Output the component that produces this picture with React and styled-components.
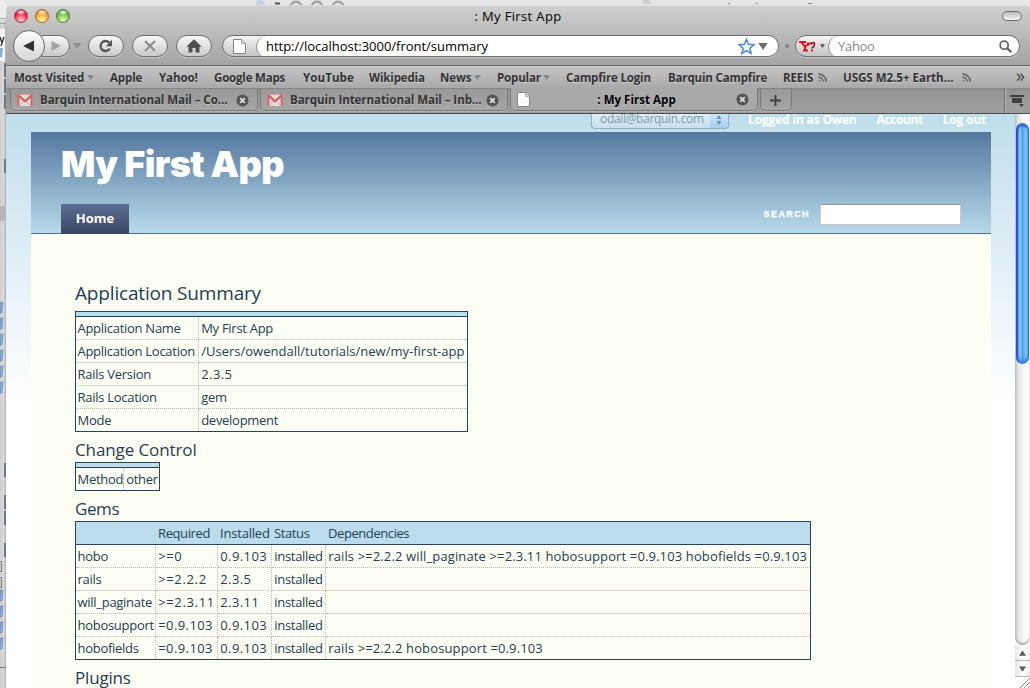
import React from "react";
import styled, { createGlobalStyle } from "styled-components";

const GlobalStyle = createGlobalStyle`
  * { box-sizing: border-box; }
  html, body { margin: 0; padding: 0; overflow: hidden; }
  body { font-family: "Open Sans", "Noto Sans", sans-serif; font-size: 13px; }
`;

/* ---------- desktop and window ---------- */

const Desktop = styled.div`
  position: relative;
  width: 1030px;
  height: 688px;
  padding: 5px 0 0 6px;
  background: linear-gradient(90deg, #cfcfcf 0, #dadada 4px, #a8a8a8 6px, #e6e6e6 6px);
  overflow: hidden;
`;

const Backdrop = styled.svg`
  position: absolute;
  left: 0;
  top: 0;
`;

const Window = styled.div`
  position: relative;
  display: flex;
  flex-direction: column;
  height: 683px;
  border-radius: 5px 5px 0 0;
  overflow: hidden;
  background: #fff;
`;

const Chrome = styled.header`
  height: 61px;
  border-top: 1px solid #dedede;
  border-bottom: 1px solid #5e5e5e;
  background: linear-gradient(#cfcfcf, #a3a3a3);
`;

const TitleBar = styled.div`
  display: flex;
  align-items: center;
  justify-content: space-between;
  height: 23px;
  padding: 0 8px 3px;
`;

const Lights = styled.div`
  display: flex;
  gap: 7px;
  width: 60px;
`;

const Light = styled.i`
  width: 14px;
  height: 14px;
  border-radius: 50%;
  border: 1px solid ${(p) => p.$edge};
  background: radial-gradient(ellipse 5px 3px at 50% 18%, rgba(255, 255, 255, 0.95), rgba(255, 255, 255, 0) 100%),
    radial-gradient(circle at 50% 85%, ${(p) => p.$glow} 10%, ${(p) => p.$mid} 62%, ${(p) => p.$edge} 100%);
`;

const WindowTitle = styled.h1`
  margin: 0;
  font-size: 13px;
  font-weight: 400;
  line-height: 20px;
  letter-spacing: 0.36px;
  color: #000;
`;

const Lozenge = styled.div`
  display: flex;
  justify-content: flex-end;
  width: 60px;

  i {
    width: 20px;
    height: 10px;
    border: 1px solid #6d6d6d;
    border-radius: 5px;
    background: linear-gradient(#bcbcbc, #f5f5f5);
  }
`;

const Toolbar = styled.div`
  display: flex;
  align-items: center;
  height: 36px;
  padding: 0 10px 2px 7px;
`;

const BackButton = styled.button`
  position: relative;
  display: grid;
  place-items: center;
  width: 32px;
  height: 32px;
  padding: 0;
  border: 1px solid #6a6a6a;
  border-radius: 50%;
  background: linear-gradient(#fdfdfd, #d6d6d6);
`;

const Pill = styled.button`
  display: grid;
  place-items: center;
  width: ${(p) => p.$w || 36}px;
  height: 22px;
  margin: 0 0 0 ${(p) => p.$ml}px;
  padding: 0 0 0 ${(p) => p.$pl || 0}px;
  border: 1px solid #6e6e6e;
  border-radius: 11px;
  background: linear-gradient(#f8f8f8, #c9c9c9);
  box-shadow: 0 1px 0 rgba(255, 255, 255, 0.35);
`;

const HistoryArrow = styled.svg`
  margin-left: 3px;
`;

const Field = styled.div`
  display: flex;
  align-items: center;
  width: ${(p) => p.$w}px;
  height: 22px;
  margin-left: ${(p) => p.$ml}px;
  border: 1px solid #6e6e6e;
  border-radius: 11px;
  background: linear-gradient(#f4f4f4, #c4c4c4);
  box-shadow: 0 1px 0 rgba(255, 255, 255, 0.35);
  overflow: hidden;
`;

const FieldIcon = styled.div`
  display: flex;
  align-items: center;
  justify-content: center;
  width: ${(p) => p.$w}px;
`;

const FieldInput = styled.div`
  display: flex;
  flex: 1;
  align-items: center;
  height: 21px;
  padding: 0 ${(p) => p.$pr}px 0 9px;
  border-left: 1px solid #8a8a8a;
  border-radius: 11px;
  background: #fff;
  color: ${(p) => p.$color};
  letter-spacing: ${(p) => p.$ls}px;

  span { flex: 1; }
`;

const GripDot = styled.i`
  width: 4px;
  height: 4px;
  margin-left: 6px;
  border-radius: 50%;
  background: #858585;
`;

const Bookmarks = styled.nav`
  display: flex;
  align-items: center;
  height: 22px;
  padding: 0 5px 0 8px;
  border-top: 1px solid #d2d2d2;
  background: linear-gradient(#c4c4c4, #a9a9a9);
`;

const Bookmark = styled.a`
  display: flex;
  flex: none;
  align-items: center;
  justify-content: space-between;
  width: ${(p) => p.$w}px;
  margin-right: 16px;
  font-size: 11.5px;
  font-weight: 700;
  line-height: 19px;
  padding-bottom: 1px;
  letter-spacing: ${(p) => p.$ls}px;
  white-space: nowrap;
  color: #333;
  text-shadow: 0 1px 0 rgba(255, 255, 255, 0.4);
`;

const Overflow = styled.span`
  margin-left: auto;
  padding-bottom: 5px;
  font-size: 18px;
  line-height: 18px;
  color: #444;
`;

const TabStrip = styled.div`
  display: flex;
  height: 26px;
  padding-left: 4px;
  border-bottom: 1px solid #4f4f4f;
  background: linear-gradient(#8b8b8b 0, #969696 5px, #9f9f9f);
`;

const Tab = styled.div`
  display: flex;
  align-items: center;
  width: ${(p) => p.$w || 248}px;
  height: 23px;
  margin-right: 2px;
  padding: 1px 8px 0 6px;
  justify-content: ${(p) => (p.$w ? "center" : "flex-start")};
  border: 1px solid #7a7a7a;
  border-top: ${(p) => (p.$active ? "0" : "1px solid #858585")};
  border-radius: 0 0 5px 5px;
  background: ${(p) => (p.$active ? "#a9a9a9" : "linear-gradient(#999, #a6a6a6)")};
  box-shadow: 0 1px 0 #b2b2b2;
`;

const TabTitle = styled.span`
  flex: 1;
  margin-left: 7px;
  font-size: 11.5px;
  font-weight: 700;
  line-height: 20px;
  letter-spacing: ${(p) => p.$ls}px;
  text-align: ${(p) => (p.$active ? "center" : "left")};
  white-space: nowrap;
  color: ${(p) => (p.$active ? "#000" : "#333")};
  text-shadow: 0 1px 0 rgba(255, 255, 255, 0.3);
`;

const TabMenu = styled.div`
  display: grid;
  place-items: center;
  width: 26px;
  margin-left: auto;
  border-left: 1px solid #6e6e6e;
  box-shadow: inset 1px 0 0 #b5b5b5;
`;

/* ---------- web page ---------- */

const Viewport = styled.div`
  display: flex;
  flex: 1;
  min-height: 0;
`;

const Page = styled.div`
  flex: 1;
  padding: 0 24px 0 25px;
  background: linear-gradient(#bfdeeb 0, #d9eaf3 110px, #eaf4fa 190px, #fff 290px);
  overflow: hidden;
`;

const Account = styled.div`
  display: flex;
  align-items: center;
  justify-content: flex-end;
  height: 18px;
  padding-right: 5px;
`;

const UserSelect = styled.div`
  display: flex;
  align-items: flex-end;
  width: 138px;
  height: 15px;
  margin: -4px 19px 0 0;
  padding-left: 8px;
  border: 1px solid #8db0cb;
  border-top: 0;
  border-radius: 0 0 4px 4px;
  background: linear-gradient(#dcedf6, #c9e0ec);
  color: #7e99a9;
  font-size: 12px;
  letter-spacing: -0.33px;

  span { flex: 1; line-height: 18px; }
`;

const SelectArrows = styled.div`
  display: grid;
  place-items: end center;
  width: 18px;
  height: 14px;
  padding-bottom: 3px;
  border-radius: 0 0 3px 0;
  background: linear-gradient(#cbe5f8, #a4cff0);
`;

const AccountLink = styled.a`
  margin: -7px 0 0 ${(p) => p.$ml || 0}px;
  font-size: 12px;
  font-weight: 700;
  line-height: 18px;
  letter-spacing: ${(p) => p.$ls}px;
  white-space: nowrap;
  color: #fff;
`;

const Banner = styled.div`
  display: flex;
  flex-direction: column;
  justify-content: space-between;
  height: 102px;
  padding: 11px 30px 0;
  background: linear-gradient(#54779f, #b9dbeb);
  box-shadow: inset 0 -1px 0 #4c7288;
`;

const SiteName = styled.h2`
  margin: 0;
  font-family: Inter, "Liberation Sans", sans-serif;
  font-size: 36px;
  font-weight: 900;
  line-height: 43px;
  letter-spacing: -0.6px;
  color: #fff;
`;

const BannerFoot = styled.div`
  display: flex;
  align-items: flex-start;
  height: 30px;
`;

const NavTab = styled.a`
  width: 68px;
  height: 30px;
  font-weight: 700;
  line-height: 29px;
  text-align: center;
  color: #fff;
  background: linear-gradient(#596d95, #3c4761);
`;

const SearchLabel = styled.label`
  margin-left: auto;
  font-family: "Liberation Sans", Arial, sans-serif;
  font-size: 9px;
  font-weight: 700;
  line-height: 21px;
  letter-spacing: 1.4px;
  color: #fff;
  -webkit-text-stroke: 0.3px #fff;
`;

const SearchInput = styled.input`
  width: 141px;
  height: 21px;
  margin-left: 10px;
  padding: 2px;
  border: 1px solid #c8cccd;
  border-top-color: #8b9499;
  background: #fff;
`;

const Content = styled.main`
  height: 460px;
  padding: 47px 44px 0;
  background: #fdfff5;
  color: #1f4053;
`;

const Heading = styled.h3`
  margin: ${(p) => (p.$large ? "0 0 6px" : "6px 0 0")};
  font-size: ${(p) => (p.$large ? 19 : 17)}px;
  font-weight: 400;
  line-height: 24px;
  letter-spacing: ${(p) => p.$ls}px;
`;

const Table = styled.div`
  display: grid;
  grid-template-columns: ${(p) => p.$cols};
  width: max-content;
  border: 1px solid #26475a;
`;

const HeadBand = styled.div`
  grid-column: 1 / -1;
  height: 5px;
  border-bottom: 1px solid #26475a;
  background: #bbdceb;
`;

const HeadCell = styled.div`
  height: 23px;
  padding-left: 2px;
  border-bottom: 1px solid #26475a;
  background: #bbdceb;
  font-size: 13px;
  line-height: 22px;
  letter-spacing: ${(p) => p.$ls}px;
  white-space: nowrap;
`;

const Cell = styled.div`
  height: ${(p) => (p.$last ? 22 : 23)}px;
  padding-left: ${(p) => (p.$first ? 1.5 : 2.2)}px;
  border-right: ${(p) => (p.$end ? "0" : "1px dotted #b9bdb6")};
  border-bottom: ${(p) => (p.$last ? "0" : "1px dotted #b9bdb6")};
  line-height: 22px;
  letter-spacing: ${(p) => p.$ls}px;
  white-space: nowrap;
`;

/* ---------- scroll bar ---------- */

const ScrollBar = styled.div`
  display: flex;
  flex-direction: column;
  width: 15px;
  background: #fff;
`;

const Track = styled.div`
  height: 531px;
  padding: 9px 1px 0;
  border-radius: 0 0 8px 8px;
  background: linear-gradient(90deg, #c6c6c6, #e9e9e9 4px, #f9f9f9 9px, #fff);
  box-shadow: inset 0 -2px 2px #a9a9a9;
`;

const Thumb = styled.div`
  height: 241px;
  border: 1px solid #3f6cae;
  border-left: 2px solid #1c58d8;
  border-radius: 7px;
  background: linear-gradient(90deg, #b0d2f5 0, #8fc0f2 3px, #3f9cf0 4px, #6fc0fb 7px, #a7e3ff 11px);
  box-shadow: inset 0 2px 2px #1a62dd, inset 0 -3px 3px #2f8af0;
`;

const ScrollButton = styled.div`
  display: grid;
  place-items: center;
  height: 16px;
  border-bottom: 1px solid #b5b5b5;
  background: linear-gradient(90deg, #e6e6e6, #fff 8px, #efefef);
`;

const Corner = styled.svg`
  margin-top: auto;
`;

/* ---------- icons ---------- */

const Down = ({ w = 7, h = 5, c = "#777" }) => (
  <svg width={w} height={h} viewBox="0 0 8 6"><path d="M0 0h8L4 6z" fill={c} /></svg>
);

const PageIcon = () => (
  <svg width="13" height="15" viewBox="0 0 13 15">
    <path d="M1 .5h7.5l4 4v10h-12V.5z" fill="#fff" stroke="#848484" />
    <path d="M8.5.5v4h4" fill="#ddd" stroke="#999" strokeWidth=".8" />
  </svg>
);

const MailIcon = () => (
  <svg width="16" height="12" viewBox="0 0 16 12">
    <rect width="16" height="12" rx="1" fill="#e4dada" />
    <path d="M3 11l4-5M13 11L9 6" stroke="#c3aeae" fill="none" />
    <path d="M1.3 12V1.2L8 7.2l6.700-6V12" stroke="#cd6464" strokeWidth="2.2" fill="none" />
    <path d="M2 .5h12" stroke="#dc9999" />
  </svg>
);

const CloseIcon = () => (
  <svg width="13" height="13" viewBox="0 0 13 13">
    <circle cx="6.500" cy="6.500" r="6" fill="#555" />
    <path d="M4.200 4.200l4.600 4.600M8.800 4.200L4.200 8.800" stroke="#ddd" strokeWidth="1.900" />
  </svg>
);

const Rss = () => (
  <svg width="9" height="9" viewBox="0 0 9 9" fill="none" stroke="#5a5a5a" strokeWidth="1.300">
    <path d="M.5 4a4.500 4.500 0 0 1 4.500 4.800M.5 1A7.600 7.600 0 0 1 8.200 8.800" />
    <circle cx="1.400" cy="7.600" r=".8" fill="#5a5a5a" stroke="none" />
  </svg>
);

const folderYs = [302, 318, 334, 350, 366, 382, 590, 606, 622, 638];
const chipYs = [63, 79, 95, 159, 463, 495, 511, 543];

const DesktopBackdrop = () => (
  <Backdrop width="1030" height="688">
    <rect width="1030" height="5" fill="#e6e6e6" />
    <rect width="6" height="20" fill="#ececec" />
    <path d="M0 18.500h6M0 23.500h6" stroke="#a5a5a5" />
    <rect y="29" width="5" height="32" fill="#f2f2f2" />
    <path d="M0 37l2 6M4 37l-3 9" stroke="#222" strokeWidth="1.200" />
    <path d="M0 48h3l-1 9H0z" fill="#86afd9" />
    <rect y="206" width="5" height="15" fill="#b7b7b7" />
    {folderYs.map((y) => (
      <path key={y} d={`M0 ${y}h3l-1 11H0z`} fill="#7fa9d8" stroke="#5f86b3" strokeWidth=".5" />
    ))}
    {chipYs.map((y) => (
      <rect key={y} x="4" y={y} width="2" height="14" fill="#6e7784" />
    ))}
    <path d="M0 561.500h1.500v10H0M0 577.500h1.500v10H0M0 667.500h6" stroke="#777" fill="none" />
    <path d="M256 0h6l3 3v2h-9z" fill="#c3d7ec" />
    <path d="M275 3.500h5" stroke="#555" strokeWidth="2" />
    {[296, 317, 338].map((x) => (
      <circle key={x} cx={x} cy="7" r="5.500" fill="#ddd" stroke="#999" strokeWidth="2" />
    ))}
    <path d="M643 0h6l4 4h-10z" fill="#d0d0d0" />
    <path d="M728 3.500h2M756 3.500h2M808 3.500h4" stroke="#888" />
  </Backdrop>
);

/* ---------- data ---------- */

const bookmarks = [
  { label: "Most Visited", w: 80, ls: -0.05, menu: true },
  { label: "Apple", w: 33, ls: -0.1 },
  { label: "Yahoo!", w: 39, ls: -0.1 },
  { label: "Google Maps", w: 73, ls: -0.18 },
  { label: "YouTube", w: 50, ls: 0.1 },
  { label: "Wikipedia", w: 55, ls: -0.15 },
  { label: "News", w: 41, ls: -0.1, menu: true },
  { label: "Popular", w: 53, ls: -0.15, menu: true },
  { label: "Campfire Login", w: 86, ls: -0.15 },
  { label: "Barquin Campfire", w: 99, ls: -0.15 },
  { label: "REEIS", w: 44, ls: -0.1, feed: true },
  { label: "USGS M2.5+ Earth…", w: 128, ls: 0, feed: true },
];

const summary = [
  ["Application Name", "My First App"],
  ["Application Location", "/Users/owendall/tutorials/new/my-first-app"],
  ["Rails Version", "2.3.5"],
  ["Rails Location", "gem"],
  ["Mode", "development"],
];

const gems = [
  ["hobo", ">=0", "0.9.103", "installed", "rails >=2.2.2 will_paginate >=2.3.11 hobosupport =0.9.103 hobofields =0.9.103"],
  ["rails", ">=2.2.2", "2.3.5", "installed", ""],
  ["will_paginate", ">=2.3.11", "2.3.11", "installed", ""],
  ["hobosupport", "=0.9.103", "0.9.103", "installed", ""],
  ["hobofields", "=0.9.103", "0.9.103", "installed", "rails >=2.2.2 hobosupport =0.9.103"],
];

const spacingFor = (text) => {
  if (text.startsWith("rails >")) return 0.13;
  if (text.startsWith("/")) return 0.01;
  if (text.startsWith(">")) return 0.65;
  return /\d/.test(text) ? 0.42 : -0.28;
};

const Rows = ({ rows }) =>
  rows.map((row, r) =>
    row.map((text, c) => (
      <Cell
        key={`${r}-${c}`}
        $first={c === 0}
        $end={c === row.length - 1}
        $last={r === rows.length - 1}
        $ls={spacingFor(text)}
      >
        {text}
      </Cell>
    ))
  );

export default function App() {
  return (
    <Desktop>
      <GlobalStyle />
      <DesktopBackdrop />
      <Window>
        <Chrome>
          <TitleBar>
            <Lights>
              <Light $edge="#9c3a44" $mid="#ee1c3c" $glow="#ffb9b9" />
              <Light $edge="#a5662a" $mid="#f59a2c" $glow="#fff08a" />
              <Light $edge="#4a7a35" $mid="#62b93f" $glow="#d3f8a0" />
            </Lights>
            <WindowTitle>: My First App</WindowTitle>
            <Lozenge><i /></Lozenge>
          </TitleBar>
          <Toolbar>
            <BackButton>
              <svg width="12" height="12" viewBox="0 0 12 12"><path d="M0 6L11 .5v11z" fill="#333" /></svg>
            </BackButton>
            <Pill $w={37} $ml={-12} $pl={8}>
              <svg width="10" height="10" viewBox="0 0 10 10"><path d="M10 5L.5 0v10z" fill="#a2a2a2" /></svg>
            </Pill>
            <HistoryArrow width="8" height="6" viewBox="0 0 8 6"><path d="M.5.500h7l-3.500 4z" fill="#999" stroke="#777" strokeWidth=".7" /></HistoryArrow>
            <Pill $ml={7}>
              <svg width="14" height="14" viewBox="0 0 14 14">
                <path d="M10.800 9.600A5 5 0 1 1 10.200 3.600" fill="none" stroke="#555" strokeWidth="2.300" />
                <path d="M13 .8v6.400H6.800z" fill="#555" />
              </svg>
            </Pill>
            <Pill $ml={8}>
              <svg width="12" height="12" viewBox="0 0 12 12"><path d="M1 1l10 10M11 1L1 11" stroke="#8d8d8d" strokeWidth="2.200" /></svg>
            </Pill>
            <Pill $ml={8}>
              <svg width="16" height="14" viewBox="0 0 16 14"><path d="M8 .3L.3 7.700h2.200V13.500h4V9h3v4.500h4V7.700h2.200z" fill="#505050" /></svg>
            </Pill>
            <Field $w={557} $ml={10}>
              <FieldIcon $w={33}><PageIcon /></FieldIcon>
              <FieldInput $color="#000" $ls={-0.02} $pr={10}>
                <span>http://localhost:3000/front/summary</span>
                <svg width="17" height="17" viewBox="0 0 17 17">
                  <path d="M8.500 1.300l2.100 4.900 5.300.5-4 3.500 1.200 5.300-4.600-2.800-4.600 2.800 1.200-5.300-4-3.500 5.300-.5z" fill="#eef5ff" stroke="#4a86d8" strokeWidth="1.500" />
                </svg>
                &nbsp;<Down w={10} h={7} c="#707070" />
              </FieldInput>
            </Field>
            <GripDot />
            <Field $w={225} $ml={6}>
              <FieldIcon $w={32}>
                <svg width="17" height="11" viewBox="0 0 17 11">
                  <path d="M0 1h7M8 2.500h5M2.500 1.500L6 5.500 11 2.500M6 5v4.500M4 9.500h5" stroke="#e4121c" strokeWidth="2" fill="none" />
                  <path d="M12.500 2.500q3.500-2 3 1t-3 3.500M12 9.500h2" stroke="#8c1016" strokeWidth="1.500" fill="none" />
                </svg>
                &nbsp;<Down w={5} h={4} c="#555" />
              </FieldIcon>
              <FieldInput $color="#8a8a8a" $ls={-0.3} $pr={7}>
                <span>Yahoo</span>
                <svg width="13" height="13" viewBox="0 0 13 13" fill="none" stroke="#686868">
                  <circle cx="5.200" cy="5.200" r="4" strokeWidth="1.800" />
                  <path d="M8.200 8.200l4 4" strokeWidth="2.400" />
                </svg>
              </FieldInput>
            </Field>
          </Toolbar>
        </Chrome>

        <Bookmarks>
          {bookmarks.map((b) => (
            <Bookmark key={b.label} $w={b.w} $ls={b.ls}>
              {b.label}
              {b.menu && <Down w={7} h={5} c="#858585" />}
              {b.feed && <Rss />}
            </Bookmark>
          ))}
          <Overflow>»</Overflow>
        </Bookmarks>

        <TabStrip>
          <Tab>
            <MailIcon />
            <TabTitle $ls={-0.05}>Barquin International Mail – Co…</TabTitle>
            <CloseIcon />
          </Tab>
          <Tab>
            <MailIcon />
            <TabTitle $ls={-0.05}>Barquin International Mail – Inb…</TabTitle>
            <CloseIcon />
          </Tab>
          <Tab $active>
            <PageIcon />
            <TabTitle $active $ls={0.04}>: My First App</TabTitle>
            <CloseIcon />
          </Tab>
          <Tab $w={32}>
            <svg width="11" height="11" viewBox="0 0 11 11"><path d="M5.500 0v11M0 5.500h11" stroke="#3d3d3d" strokeWidth="1.800" /></svg>
          </Tab>
          <TabMenu>
            <svg width="15" height="13" viewBox="0 0 15 13" fill="#3e3e3e"><path d="M0 1h14v2H0zM2 4h10v4q0 1-1 1H3q-1 0-1-1zM9 10h5l-2.500 3z" /></svg>
          </TabMenu>
        </TabStrip>

        <Viewport>
          <Page>
            <Account>
              <UserSelect>
                <span>odall@barquin.com</span>
                <SelectArrows>
                  <svg width="6" height="10" viewBox="0 0 6 10"><path d="M3 0l2.500 4h-5zM3 10l2.500-4h-5z" fill="#7592ac" /></svg>
                </SelectArrows>
              </UserSelect>
              <AccountLink $ls={-0.17}>Logged in as Owen</AccountLink>
              <AccountLink $ml={20} $ls={-0.4}>Account</AccountLink>
              <AccountLink $ml={20} $ls={-0.2}>Log out</AccountLink>
            </Account>
            <Banner>
              <SiteName>My First App</SiteName>
              <BannerFoot>
                <NavTab>Home</NavTab>
                <SearchLabel>SEARCH</SearchLabel>
                <SearchInput />
              </BannerFoot>
            </Banner>
            <Content>
              <Heading $large $ls={-0.17}>Application Summary</Heading>
              <Table $cols="123px 268px">
                <HeadBand />
                <Rows rows={summary} />
              </Table>
              <Heading $ls={-0.1}>Change Control</Heading>
              <Table $cols="48px 35px">
                <HeadBand />
                <Rows rows={[["Method", "other"]]} />
              </Table>
              <Heading $ls={-0.4}>Gems</Heading>
              <Table $cols="80px 62px 54px 54px 484px">
                <HeadCell />
                <HeadCell $ls={-0.39}>Required</HeadCell>
                <HeadCell $ls={-0.2}>Installed</HeadCell>
                <HeadCell $ls={-0.38}>Status</HeadCell>
                <HeadCell $ls={-0.42}>Dependencies</HeadCell>
                <Rows rows={gems} />
              </Table>
              <Heading $ls={-0.17}>Plugins</Heading>
            </Content>
          </Page>
          <ScrollBar>
            <Track><Thumb /></Track>
            <ScrollButton>
              <svg width="7" height="6" viewBox="0 0 8 6"><path d="M0 6h8L4 0z" fill="#5a5a5a" /></svg>
            </ScrollButton>
            <ScrollButton><Down w={7} h={6} c="#5a5a5a" /></ScrollButton>
            <Corner width="15" height="11" viewBox="0 0 15 11">
              <path d="M5 11L15 1M9 11l6-6M13 11l2-2" stroke="#8a8a8a" />
            </Corner>
          </ScrollBar>
        </Viewport>
      </Window>
    </Desktop>
  );
}
